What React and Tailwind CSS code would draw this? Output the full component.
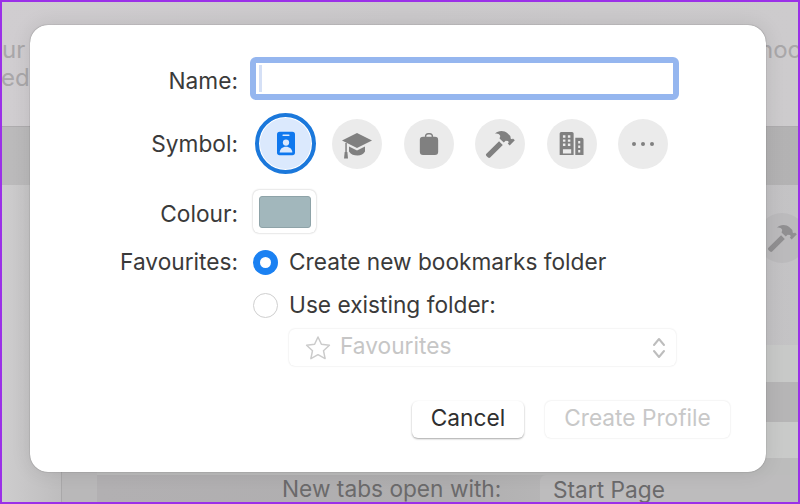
import React from "react";

const font = "font-['Inter','Liberation_Sans',sans-serif]";

function Label({ children, className = "" }) {
  return <div className={`w-[208px] shrink-0 text-right text-[22.7px] leading-7 text-[#3a3a3a] ${className}`}>{children}</div>;
}

function SymbolCircle({ children }) {
  return <div className="flex h-[50px] w-[50px] items-center justify-center rounded-full bg-[#ebebeb]">{children}</div>;
}

const Cap = () => (
  <svg width="32" height="32" viewBox="0 0 32 32" fill="#808080">
    <path d="M16 5 1 12.5 16 20l15-7.500z" />
    <path d="M8 18.500v5c2 3 5 4 8.500 4s6-1.500 7.500-4v-5l-8 4z" />
    <rect x="4.300" y="15" width="1.500" height="9" />
    <path d="M3.700 24h2.700l.6 6.500H3z" />
  </svg>
);
const Bag = () => (
  <svg width="22" height="24" viewBox="0 0 24 26" fill="#808080">
    <path d="M7.500 6V4.500C7.500 2.500 9 1 11 1h2c2 0 3.500 1.500 3.500 3.500V6h-1.600V4.500c0-1-.9-1.900-1.900-1.900h-2c-1 0-1.900.9-1.900 1.900V6z" />
    <rect x="2" y="5" width="20" height="20" rx="3.500" />
  </svg>
);
const Hammer = ({ fill = "#808080" }) => (
  <svg width="30" height="30" viewBox="0 0 32 32" fill={fill}>
    <path d="M1.500 26.500 15 13l4 4L5.500 30.500c-.7.700-1.500.700-2.200 0l-1.800-1.800c-.7-.7-.7-1.500 0-2.200z" />
    <path d="M10.500 5C14 1.500 20 1 24 4.500l3 3 .5 3 1.500.5.800-1 2 2-5.500 5.500-2-2 1-1-.6-1.700-2.700-.3-2 2-4.500-4.500.8-2.500C15 5 13 4.500 10.500 5z" />
  </svg>
);
const Building = () => (
  <svg width="28" height="25" viewBox="0 0 34 28" fill="#808080">
    <path fillRule="evenodd" d="M2 2a2 2 0 0 1 2-2h13a2 2 0 0 1 2 2v26H2zM6 4v3h3V4zm6 0v3h3V4zM6 9v3h3V9zm6 0v3h3V9zM6 14v3h3v-3zm6 0v3h3v-3zM6 21v5h10v-5z" />
    <path fillRule="evenodd" d="M21 7h8a2 2 0 0 1 2 2v19h-10zM24.500 11v3h2.500v-3zm0 5.500v3h2.500v-3zm0 5.500v3h2.500v-3z" />
  </svg>
);

export default function App() {
  return (
    <div className={`relative h-[504px] w-[800px] overflow-hidden border-2 border-[#9b30e8] ${font}`}>
      {/* dimmed window behind the sheet */}
      <div className="flex h-full flex-col bg-[#c6c5c6]">
        <div className="h-[125px] shrink-0 border-b border-[#aeacae] bg-gradient-to-r from-[#d0cdd0] via-[#cbc9cb] to-[#cdcbcd] pt-[34px] text-[24px] leading-[28px] text-[#a9a7a9]">
          <div className="flex justify-between">
            <span>ur</span>
            <span className="-mr-[4px]">hoo</span>
          </div>
          <div className="-ml-[1px]">ed</div>
        </div>
        <div className="h-[58px] shrink-0 bg-gradient-to-r from-[#bbbabb] to-[#b3b2b3]" />
        <div className="flex min-h-0 flex-1">
          <div className="w-[59px] shrink-0 bg-gradient-to-r from-[#cecdce] to-[#bebdbe]" />
          <div className="w-[36px] shrink-0 border-l border-[#a9a8a9] bg-[#b9b8b9]" />
          <div className="flex min-w-0 flex-1 flex-col">
            <div className="flex h-[160px] shrink-0 justify-end bg-gradient-to-r from-[#b0afb0] to-[#c4c3c5] pt-[28px]">
              <div className="-mr-[9px] flex h-[50px] w-[50px] items-center justify-center rounded-full bg-[#bbbabc]">
                <Hammer fill="#908f91" />
              </div>
            </div>
            <div className="h-[37px] shrink-0 bg-[#c8c9c8]" />
            <div className="h-[40px] shrink-0 bg-[#b6b5b6]" />
            <div className="h-[36px] shrink-0 bg-[#c9cac9]" />
            <div className="h-[17px] shrink-0 bg-[#bcbcbc]" />
            <div className="flex min-h-0 flex-1 items-end bg-gradient-to-r from-[#b2b0b2] via-[#afaeaf] to-[#c8c8c8] text-[22.7px] leading-[26px] text-[#6b6a6b]">
              <span className="ml-[185px] w-[258px] shrink-0">New tabs open with:</span>
              <div className="flex h-[27px] flex-1 items-center rounded-tl-[6px] bg-[#bdbcbd] pl-[13px] pt-[3px]">Start Page</div>
            </div>
          </div>
        </div>
      </div>

      {/* the sheet */}
      <div className="absolute left-[28px] top-[23px] flex h-[447px] w-[736px] flex-col rounded-[18px] bg-white pt-[32px] shadow-[0_0_1px_rgba(0,0,0,0.6),0_0_20px_rgba(0,0,0,0.1)]">
        <div className="flex items-center gap-[12px]">
          <Label className="pt-[5px]">Name:</Label>
          <div className="flex h-[43px] w-[429px] items-center rounded-[6px] border-[6px] border-[#95b6ef] bg-white pl-[3px]">
            <div className="h-[27px] w-[3px] bg-[#d5e0f6]" />
          </div>
        </div>

        <div className="mt-[13px] flex items-center">
          <Label>Symbol:</Label>
          <div className="ml-[17px] flex items-center gap-[21.6px]">
            <div className="-mr-[5.600px] flex h-[61px] w-[61px] items-center justify-center rounded-full border-4 border-[#1b78db] bg-[#dbe9fd] shadow-[inset_0_0_0_1px_white]">
              <svg width="18" height="25" viewBox="0 0 20 26">
                <rect x="0" y="0" width="20" height="26" rx="3" fill="#0f78ee" />
                <rect x="6" y="3" width="8" height="1.600" rx=".8" fill="#dbe9fd" />
                <circle cx="10" cy="12" r="3.500" fill="#dbe9fd" />
                <path d="M3 23c0-4 3-6.500 7-6.500s7 2.500 7 6.500z" fill="#dbe9fd" />
              </svg>
            </div>
            <SymbolCircle><Cap /></SymbolCircle>
            <SymbolCircle><Bag /></SymbolCircle>
            <SymbolCircle><Hammer /></SymbolCircle>
            <SymbolCircle><Building /></SymbolCircle>
            <SymbolCircle>
              <div className="flex gap-[5px]">
                <span className="h-[4px] w-[4px] rounded-full bg-[#808080]" />
                <span className="h-[4px] w-[4px] rounded-full bg-[#808080]" />
                <span className="h-[4px] w-[4px] rounded-full bg-[#808080]" />
              </div>
            </SymbolCircle>
          </div>
        </div>

        <div className="mt-[16px] flex items-center">
          <Label className="pt-[4px]">Colour:</Label>
          <div className="ml-[15px] flex h-[43px] w-[63px] items-center justify-center rounded-[6px] bg-white shadow-[0_0_2px_rgba(0,0,0,0.3)]">
            <div className="h-[32px] w-[52px] rounded-[3px] border border-[#8ea3a8] bg-[#a2b7bc]" />
          </div>
        </div>

        <div className="mt-[15px] flex items-center">
          <Label>Favourites:</Label>
          <div className="ml-[15px] flex items-center gap-[11px]">
            <div className="flex h-[25px] w-[25px] items-center justify-center rounded-full bg-[#1b81f2]">
              <div className="h-[11px] w-[11px] rounded-full bg-white" />
            </div>
            <span className="text-[22.7px] leading-7 text-[#3a3a3a]">Create new bookmarks folder</span>
          </div>
        </div>

        <div className="ml-[223px] mt-[15px] flex items-center gap-[11px]">
          <div className="h-[25px] w-[25px] rounded-full border border-[#cfcfcf] bg-white" />
          <span className="text-[22.7px] leading-7 text-[#3a3a3a]">Use existing folder:</span>
        </div>

        <div className="ml-[259px] mt-[10px] flex h-[37px] w-[387px] items-center rounded-[6px] bg-white pl-[16px] pr-[10px] text-[22.7px] text-[#c6c6c6] shadow-[0_0_2px_rgba(0,0,0,0.14)]">
          <svg width="26" height="26" viewBox="0 0 26 26" fill="none" stroke="#cbcbcb" strokeWidth="1.500" strokeLinejoin="round">
            <path d="M13 2l3.400 7.300 8 1-5.900 5.400 1.600 7.900L13 19.700l-7.100 3.900 1.600-7.900-5.900-5.400 8-1z" />
          </svg>
          <span className="mb-[3px] ml-[9px] flex-1">Favourites</span>
          <svg width="14" height="24" viewBox="0 0 14 24" fill="none" stroke="#bdbdbd" strokeWidth="2" strokeLinecap="round" strokeLinejoin="round">
            <path d="M2 9l5-6 5 6M2 15l5 6 5-6" />
          </svg>
        </div>

        <div className="ml-[382px] mt-[35px] flex gap-[21px]">
          <div className="flex h-[37px] w-[112px] items-center justify-center rounded-[6px] bg-white pb-[3px] text-[22.7px] text-[#2f2f2f] shadow-[0_1px_2px_rgba(0,0,0,0.35)]">Cancel</div>
          <div className="flex h-[37px] w-[185px] items-center justify-center rounded-[6px] bg-white pb-[3px] text-[22.7px] text-[#c8c8c8] shadow-[0_0_2px_rgba(0,0,0,0.14)]">Create Profile</div>
        </div>
      </div>
    </div>
  );
}
